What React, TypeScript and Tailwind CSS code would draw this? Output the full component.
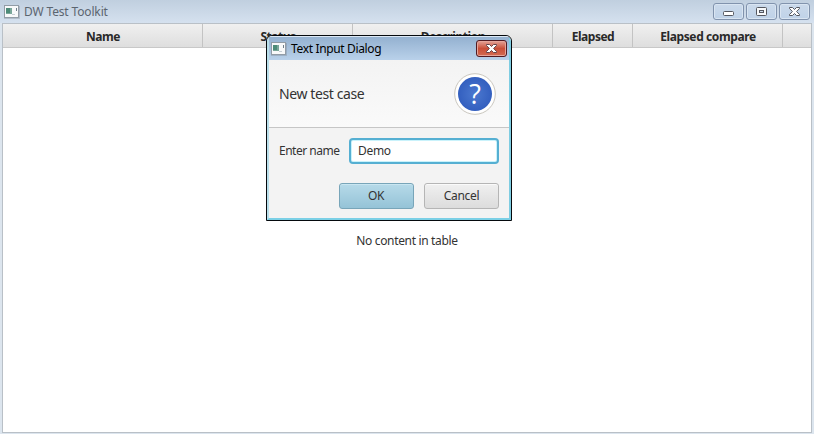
import React from "react";

const columns = [
  { label: "Name", width: "w-[200px]", spacing: "tracking-[-0.5px]" },
  { label: "Status", width: "w-[150px]", spacing: "tracking-[-0.5px]" },
  { label: "Description", width: "w-[200px]", spacing: "tracking-[-0.4px]" },
  { label: "Elapsed", width: "w-[80px]", spacing: "tracking-[-0.5px]" },
  { label: "Elapsed compare", width: "w-[150px]", spacing: "tracking-[-0.4px]" },
];

function AppIcon() {
  return (
    <svg width="16" height="14" viewBox="0 0 16 14" className="block shrink-0">
      <rect x="0.5" y="0.5" width="14" height="12" fill="#f8f9fa" stroke="#929ca6" />
      <path d="M0 13.5H15.5V1" fill="none" stroke="#77818b" opacity=".35" />
      <rect x="2" y="3" width="6" height="6" fill="#7aa79a" />
      <rect x="2" y="3" width="4" height="5" fill="#4d8b78" />
      <path d="M8 9.5h3" stroke="#c5ced4" />
      <path d="M12.5 3v3" stroke="#6f7f8c" />
    </svg>
  );
}

function CloseGlyph({ x, y, outline }: { x: number; y: number; outline: string }) {
  return (
    <g transform={`translate(${x} ${y})`}>
      <path
        d="M0.5 0.5H3.5L5.5 2.5L7.5 0.5H10.5V1.5L7.6 4.5L10.5 7.5V8.5H7.5L5.5 6.5L3.5 8.5H0.5V7.5L3.4 4.5L0.5 1.5Z"
        fill="#fff"
        stroke={outline}
      />
    </g>
  );
}

function WindowButton({ kind }: { kind: "min" | "max" | "close" }) {
  return (
    <button className="block h-[17px] w-[31px] rounded-[3px] border border-[#8193ad] bg-linear-to-b from-[#cbdaeb] to-[#bfd2e8] shadow-[inset_0_0_0_1px_#d9e5f2]">
      <svg width="29" height="15" viewBox="0 0 29 15" className="block">
        {kind === "min" && <rect x="9.5" y="7.5" width="10" height="4" rx="1" fill="#fff" stroke="#54575f" />}
        {kind === "max" && (
          <>
            <rect x="9.5" y="3.5" width="10" height="8" rx="1" fill="#f7f9fb" stroke="#54575f" />
            <rect x="12.5" y="6.5" width="4" height="2" fill="#cbd9e8" stroke="#54575f" />
          </>
        )}
        {kind === "close" && <CloseGlyph x={9} y={3} outline="#54575f" />}
      </svg>
    </button>
  );
}

function Dialog() {
  return (
    <section className="absolute left-[266px] top-[35px] flex h-[186px] w-[246px] flex-col overflow-hidden rounded-t-[6px] border border-[#05090d] bg-[#f3f3f3] text-[#333]">
      <div className="flex grow flex-col rounded-t-[5px] border-x-2 border-b-2 border-t border-t-[#dce8f4] border-b-[#7bd0e6] border-l-[#b9dfea] border-r-[#7fcde2]">
        <header className="flex h-[23px] shrink-0 items-center justify-between bg-linear-to-b from-[#94b1d0] to-[#b9d1ea] pl-[2px] pr-[2px]">
          <div className="flex items-center gap-[4px]">
            <AppIcon />
            <h2 className="text-[12px] leading-[18px] tracking-[-0.35px] text-black">Text Input Dialog</h2>
          </div>
          <button className="block h-[17px] w-[31px] rounded-[3px] border border-[#521b22] bg-linear-to-b from-[#e3a398] via-[#c94e38] via-50% to-[#d36b51] shadow-[inset_0_0_0_1px_#e6a59a]">
            <svg width="29" height="15" viewBox="0 0 29 15" className="block">
              <CloseGlyph x={9} y={3} outline="#65444a" />
            </svg>
          </button>
        </header>
        <div className="flex h-[68px] shrink-0 items-center justify-between border-b border-[#c6c6c6] bg-linear-to-b from-[#f3f3f3] to-[#fafafa] pl-[10px] pr-[13px]">
          <h3 className="text-[14px] leading-[20px] tracking-[-0.4px]">New test case</h3>
          <svg width="42" height="42" viewBox="0 0 42 42">
            <defs>
              <radialGradient id="help">
                <stop offset="0" stopColor="#4b78cf" />
                <stop offset="1" stopColor="#335fbf" />
              </radialGradient>
            </defs>
            <circle cx="21" cy="21" r="20.3" fill="#fff" stroke="#c9c6be" />
            <circle cx="21" cy="21" r="17" fill="url(#help)" />
            <text x="21" y="30.5" fill="#fff" fontSize="27" fontFamily="Open Sans" textAnchor="middle">?</text>
          </svg>
        </div>
        <div className="flex grow flex-col px-[10px] pt-[10px]">
          <div className="flex h-[26px] items-center justify-between">
            <label className="text-[12px] leading-[18px] tracking-[-0.5px]">Enter name</label>
            <div className="flex h-[26px] w-[150px] items-center rounded-[4px] border-2 border-[#2a9bc7]/80 bg-white pl-[7px] text-[12px] tracking-[-0.3px] shadow-[inset_0_0_0_1px_#c9f2fb]">Demo</div>
          </div>
          <div className="mt-[19px] flex justify-end gap-[10px] text-[12px] tracking-[-0.3px]">
            <button className="h-[26px] w-[75px] rounded-[3px] border border-[#78a5b9] bg-linear-to-b from-[#b6dae9] to-[#95c3d7] pr-[1px] shadow-[inset_0_1px_0_#c9e6f1]">OK</button>
            <button className="h-[26px] w-[75px] rounded-[3px] border border-[#b5b5b5] bg-linear-to-b from-[#f0f0f0] to-[#dcdcdc] shadow-[inset_0_1px_0_#fafafa]">Cancel</button>
          </div>
        </div>
      </div>
    </section>
  );
}

export default function App() {
  return (
    <main className="relative flex h-[434px] w-[814px] flex-col overflow-hidden bg-[#dce5ee] px-[2px] pb-[1px] font-['Noto_Sans',sans-serif] text-[#333]">
      <header className="-mx-[2px] flex h-[23px] shrink-0 items-start justify-between bg-linear-to-b from-[#c0cfdf] to-[#d5e1ef] px-[4px] pt-[3px]">
        <div className="flex items-center gap-[4px]">
          <AppIcon />
          <h1 className="text-[12px] leading-[18px] tracking-[-0.15px] text-[#5c6570]">DW Test Toolkit</h1>
        </div>
        <div className="flex gap-[2px]">
          <WindowButton kind="min" />
          <WindowButton kind="max" />
          <WindowButton kind="close" />
        </div>
      </header>
      <div className="flex grow flex-col border border-[#b9c0c7] bg-white">
        <div className="flex h-[24px] shrink-0 border-b border-[#c8c8c8] bg-linear-to-b from-[#f0f0f0] to-[#dedede]">
          {columns.map((column) => (
            <div key={column.label} className={`flex shrink-0 items-center justify-center border-r border-[#c3c3c3] pl-px pt-[3px] text-[12px] font-bold leading-[18px] text-[#292929] ${column.width} ${column.spacing}`}>
              {column.label}
            </div>
          ))}
        </div>
        <div className="flex grow items-center justify-center pt-[2px] text-[12px] tracking-[-0.33px]">No content in table</div>
      </div>
      <Dialog />
    </main>
  );
}
